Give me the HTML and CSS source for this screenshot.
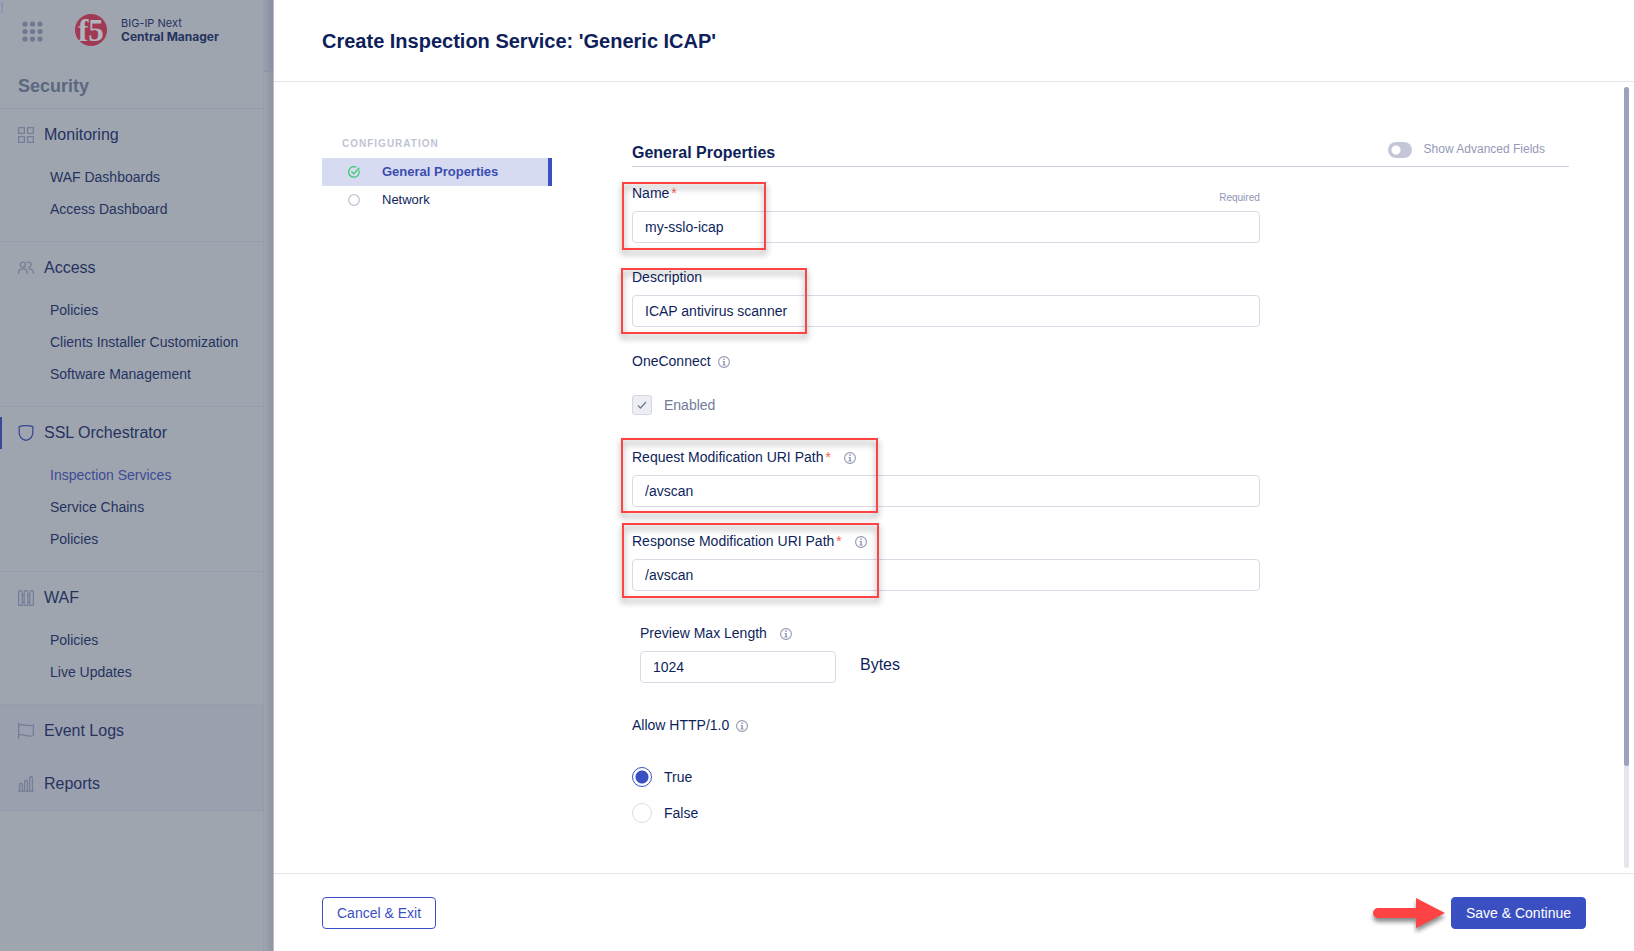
FILE: index.html
```html
<!DOCTYPE html>
<html lang="en">
<head>
<meta charset="utf-8">
<title>Create Inspection Service</title>
<link rel="stylesheet" href="styles.css">
</head>
<body>
<svg class="defs" aria-hidden="true">
  <symbol id="info" viewBox="0 0 12 12"><circle cx="6" cy="6" r="5.4" fill="none" stroke="currentColor" stroke-width="1.1"/><path d="M5.3 2.6h1.5v1.4H5.3zM4.6 5h2.2v3.4h.9v1H4.4v-1h.9V6h-.7z" fill="currentColor"/></symbol>
</svg>
<div class="app">
  <aside class="sidebar">
    <header class="brand">
      <button class="launcher" type="button" aria-label="Applications">
        <svg viewBox="0 0 21 21" width="21" height="21" fill="currentColor"><circle cx="3" cy="3" r="2.6"/><circle cx="10.500" cy="3" r="2.6"/><circle cx="18" cy="3" r="2.6"/><circle cx="3" cy="10.500" r="2.6"/><circle cx="10.500" cy="10.500" r="2.6"/><circle cx="18" cy="10.500" r="2.6"/><circle cx="3" cy="18" r="2.6"/><circle cx="10.500" cy="18" r="2.6"/><circle cx="18" cy="18" r="2.6"/></svg>
      </button>
      <svg class="logo" viewBox="0 0 32 32" width="32" height="32"><circle cx="16" cy="16" r="16" fill="#a03a54"/><text x="3" y="27" class="logo-text">f5</text></svg>
      <div class="product"><span>BIG-IP Next</span><strong>Central Manager</strong></div>
    </header>
    <h2 class="area">Security</h2>
    <nav>
      <section class="group">
        <h3><svg viewBox="0 0 16 16" width="16" height="16"><path d="M.6.6h5.800v5.800h-5.800zM9.600.6h5.800v5.800h-5.800zM.6 9.600h5.800v5.800h-5.800zM9.600 9.600h5.800v5.800h-5.800z"/></svg>Monitoring</h3>
        <a href="#">WAF Dashboards</a><a href="#">Access Dashboard</a>
      </section>
      <section class="group">
        <h3><svg viewBox="0 0 16 16" width="16" height="16"><circle cx="4.800" cy="4.800" r="2.600"/><path d="M.6 14V12.500C.6 10 2.500 8.800 4.800 8.800S9 10 9 12.500V14M8.800 2.800A2.600 2.600 0 1 1 9.800 7.200M10.500 8.900C13.500 8.600 15.400 10 15.400 12.500V14"/></svg>Access</h3>
        <a href="#">Policies</a><a href="#">Clients Installer Customization</a><a href="#">Software Management</a>
      </section>
      <section class="group current">
        <h3><svg viewBox="0 0 16 16" width="16" height="16"><path d="M1.200 1.600Q8-.4 14.800 1.600V7.500C14.800 12 12 14.500 8 15.500C4 14.500 1.200 12 1.200 7.500Z"/></svg>SSL Orchestrator</h3>
        <a href="#" class="active">Inspection Services</a><a href="#">Service Chains</a><a href="#">Policies</a>
      </section>
      <section class="group">
        <h3><svg viewBox="0 0 16 16" width="16" height="16"><path d="M.6 15.400V3Q.6.6 2.400.6T4.200 3V15.400ZM6.200 15.400V3Q6.200.6 8 .6T9.800 3V15.400ZM11.800 15.400V3Q11.800.6 13.600.6T15.400 3V15.400ZM4.200 5h2M4.200 12h2M9.800 5h2M9.800 12h2"/></svg>WAF</h3>
        <a href="#">Policies</a><a href="#">Live Updates</a>
      </section>
      <section class="group single">
        <h3><svg viewBox="0 0 16 16" width="16" height="16"><path d="M.6 0V16M.6 2.500C3-.5 7 4.500 15.400 2V12.500C9 15 4.500 9.500.6 12.500"/></svg>Event Logs</h3>
      </section>
      <section class="group single">
        <h3><svg viewBox="0 0 16 16" width="16" height="16"><path d="M0 15.200H16M1.600 15V8.500Q1.600 7.500 2.600 7.500H3.400Q4.400 7.500 4.400 8.500V15M6.600 15V5.500Q6.600 4.500 7.600 4.500H8.400Q9.400 4.500 9.400 5.500V15M11.600 15V2Q11.600.6 13 .6T14.400 2V15"/></svg>Reports</h3>
      </section>
    </nav>
  </aside>
  <div class="backdrop"><div class="backdrop-bar"></div></div>
  <main class="panel">
    <header class="panel-head"><h1>Create Inspection Service: 'Generic ICAP'</h1></header>
    <div class="panel-body">
      <nav class="steps">
        <p>CONFIGURATION</p>
        <a href="#" class="step selected"><svg viewBox="0 0 12 12" width="12" height="12"><path d="M11 4.500A5.300 5.300 0 1 1 8.300 1.200M3.400 5.400 5.800 7.800 11.400 1.800"/></svg>General Properties</a>
        <a href="#" class="step"><svg viewBox="0 0 12 12" width="12" height="12"><circle cx="6" cy="6" r="5.300"/></svg>Network</a>
      </nav>
      <form class="form" id="icap">
        <div class="form-head">
          <h2>General Properties</h2>
          <label class="advanced"><input type="checkbox" role="switch"><span>Show Advanced Fields</span></label>
        </div>
        <div class="fields">
          <div class="field">
            <div class="caption"><label for="name">Name<i>*</i></label><small>Required</small></div>
            <input type="text" id="name" value="my-sslo-icap">
            <div class="mark mark-name"></div>
          </div>
          <div class="field">
            <div class="caption"><label for="desc">Description</label></div>
            <input type="text" id="desc" value="ICAP antivirus scanner">
            <div class="mark mark-desc"></div>
          </div>
          <div class="field choice">
            <div class="caption"><span>OneConnect</span><svg class="info"><use href="#info"/></svg></div>
            <label class="option disabled"><span class="tick"><input type="checkbox" checked disabled><svg viewBox="0 0 20 20" width="20" height="20"><path d="M6 10.500 8.500 13 14 7"/></svg></span>Enabled</label>
          </div>
          <div class="field">
            <div class="caption"><label for="req">Request Modification URI Path<i>*</i></label><svg class="info wide"><use href="#info"/></svg></div>
            <input type="text" id="req" value="/avscan">
            <div class="mark mark-req"></div>
          </div>
          <div class="field">
            <div class="caption"><label for="res">Response Modification URI Path<i>*</i></label><svg class="info wide"><use href="#info"/></svg></div>
            <input type="text" id="res" value="/avscan">
            <div class="mark mark-res"></div>
          </div>
          <div class="field preview">
            <div class="caption"><label for="len">Preview Max Length</label><svg class="info wide"><use href="#info"/></svg></div>
            <div class="with-unit"><input type="text" id="len" value="1024"><span>Bytes</span></div>
          </div>
          <div class="field choice" role="radiogroup" aria-labelledby="http">
            <div class="caption"><span id="http">Allow HTTP/1.0</span><svg class="info"><use href="#info"/></svg></div>
            <label class="option first"><input type="radio" name="http" checked>True</label>
            <label class="option"><input type="radio" name="http">False</label>
          </div>
        </div>
      </form>
      <div class="scroll"><div class="thumb"></div></div>
    </div>
    <footer class="panel-foot">
      <button type="button" class="btn">Cancel &amp; Exit</button>
      <div class="save">
        <svg class="arrow" viewBox="0 0 74 32" width="74" height="32"><path d="M6 11H44V1L73 16 44 31V21H6A5 5 0 0 1 6 11Z" fill="#fd4343"/></svg>
        <button type="submit" form="icap" class="btn primary">Save &amp; Continue</button>
      </div>
    </footer>
  </main>
</div>
</body>
</html>
```

FILE: styles.css
```css
* { box-sizing: border-box; }
body { margin: 0; font-family: "Liberation Sans", Arial, sans-serif; font-size: 14px; line-height: 20px; color: #0e1f5b; }
h1, h2, h3, p { margin: 0; }
a { color: inherit; text-decoration: none; }
button, input { font: inherit; color: inherit; margin: 0; }
.defs { display: none; }
.app { display: flex; min-height: 100vh; background: #9ea5af; }

/* Sidebar */
.sidebar { position: relative; flex: 0 0 264px; border-right: 1px solid #979daa; color: #26335f; }
.sidebar::before { content: ""; position: absolute; left: 1px; top: 2px; width: 2px; height: 11px; background: #8c94b8; }
.brand { display: flex; align-items: flex-start; height: 64px; padding: 14px 0 0 22px; }
.launcher { display: block; padding: 0; margin: 7px 32px 0 0; border: 0; background: none; color: #6f7990; line-height: 0; }
.logo { flex: none; margin-right: 14px; overflow: visible; }
.logo-text { fill: #b0b5be; font-family: "Liberation Serif", serif; font-size: 31px; font-weight: 700; }
.product { display: flex; flex-direction: column; padding-top: 2px; font-family: Inter, sans-serif; line-height: 14px; }
.product span { font-size: 11px; }
.product strong { font-size: 12px; font-weight: 700; }
.area { padding: 10px 18px; height: 45px; border-bottom: 1px solid #969daa; font-size: 18px; line-height: 24px; color: #5c6780; }
.group { padding-bottom: 16px; border-bottom: 1px solid #979daa; }
.group h3 { display: flex; align-items: center; gap: 10px; height: 52px; padding-left: 18px; font-size: 16px; font-weight: 400; }
.group h3 svg { fill: none; stroke: #757e96; stroke-width: 1.3; }
.group a { display: block; padding-left: 50px; line-height: 32px; }
.group .active { color: #3d4a96; }
.current h3 { background: linear-gradient(#3b4998, #3b4998) 0 50% / 2px 32px no-repeat; }
.current h3 svg { stroke: #3d4a96; }
.single { padding-bottom: 0; background: #9ba0ae; }
.backdrop { flex: 0 0 10px; background: linear-gradient(90deg, #9ea5af, #8e95a3); border-right: 1px solid #b9bec7; }
.backdrop-bar { height: 72px; border-bottom: 1px solid #8c93a3; background: linear-gradient(90deg, #999fad, #888fa0); }

/* Panel */
.panel { flex: 1; min-width: 0; display: flex; flex-direction: column; background: #fff; }
.panel-head { height: 82px; padding: 26px 48px; border-bottom: 1px solid #e5e6ee; }
.panel-head h1 { font-size: 20px; line-height: 30px; }
.panel-body { flex: 1; display: flex; padding-left: 48px; }
.steps { flex: 0 0 230px; padding-top: 52px; font-size: 13px; }
.steps p { padding: 0 0 4px 20px; font-size: 10px; font-weight: 700; letter-spacing: 1px; color: #c0c4d5; }
.step { display: flex; align-items: center; gap: 22px; height: 28px; padding-left: 26px; }
.step svg { fill: none; stroke: #c0c4d5; stroke-width: 1.3; }
.selected { font-weight: 700; color: #3a4db0; background: #d7dbf1; border-right: 4px solid #3a50c2; }
.selected svg { stroke: #3ecb75; }

/* Form */
.form { flex: 1; margin: 50px 55px 50px 80px; }
.form-head { display: flex; justify-content: space-between; height: 35px; border-bottom: 1px solid #cbd0e3; }
.form-head h2 { padding-top: 11px; font-size: 16px; line-height: 20px; }
.advanced { display: flex; align-items: center; gap: 12px; height: 34px; padding: 2px 24px 0 0; font-size: 12px; color: #9399b7; }
.advanced span { padding-bottom: 3px; }
.advanced input { appearance: none; width: 24px; height: 16px; border-radius: 8px; background: radial-gradient(circle at 8px 8px, #fff 4px, #c4c7d7 5px); }
.fields { width: 67%; padding-top: 16px; display: flex; flex-direction: column; gap: 24px; }
.field { position: relative; }
.caption { display: flex; align-items: center; height: 20px; margin-bottom: 8px; }
.caption i { margin-left: 2px; font-style: normal; color: #fd5c4c; }
.caption small { margin: 10px 0 0 auto; font-size: 10px; color: #8e95b3; }
.info { width: 12px; height: 12px; margin: 2px 0 0 7px; color: #9298b2; }
.info.wide { margin-left: 13px; }
input[type=text] { display: block; width: 100%; height: 32px; padding: 0 12px; border: 1px solid #d8dae5; border-radius: 4px; background: #fff; }
.option { display: flex; align-items: center; gap: 12px; height: 20px; margin-top: 16px; }
.option input { flex: none; }
.disabled { margin: 24px 0 8px; color: #737b9a; }
.tick { display: grid; }
.tick > * { grid-area: 1 / 1; }
.tick input { appearance: none; width: 20px; height: 20px; border: 1px solid #d5d7e2; border-radius: 3px; background: #edeef3; }
.tick svg { position: relative; fill: none; stroke: #747c9c; stroke-width: 1.4; }
.option.first { margin-top: 32px; }
.option input[type=radio] { appearance: none; width: 20px; height: 20px; border: 1px solid #dcdee8; border-radius: 50%; background: #fff; }
.option input[type=radio]:checked { border-color: #3a50c2; background: radial-gradient(circle, #3a50c2 6px, #fff 7px); }
.preview { margin: 8px 0 8px 8px; }
.with-unit { display: flex; gap: 24px; font-size: 16px; }
.with-unit span { padding-top: 4px; }
.with-unit input { width: 196px; font-size: 14px; }

/* Callouts */
.mark { position: absolute; border: 2px solid #fd4343; filter: drop-shadow(0 4px 3px rgba(0, 0, 0, 0.45)); pointer-events: none; }
.mark-name { left: -10px; top: -1px; bottom: -7px; width: 144px; }
.mark-desc { left: -11px; top: 1px; bottom: -7px; width: 186px; }
.mark-req { left: -11px; top: -9px; bottom: -6px; width: 257px; }
.mark-res { left: -10px; top: -8px; bottom: -7px; width: 257px; }

.scroll { flex: 0 0 5px; margin: 5px 5px 5px 0; border-radius: 3px; background: #e5e6ee; }
.thumb { height: 87%; border-radius: 3px; background: #9ba2bd; }

/* Footer */
.panel-foot { display: flex; justify-content: space-between; align-items: center; height: 78px; padding: 0 48px; border-top: 1px solid #e5e6ee; }
.btn { height: 32px; padding: 0 14px; border: 1px solid #3a50c2; border-radius: 4px; background: #fff; color: #3a50c2; }
.primary { background: #3a50c2; color: #fff; }
.save { position: relative; }
.arrow { position: absolute; right: 140px; top: 0; filter: drop-shadow(0 4px 2px rgba(0, 0, 0, 0.45)); overflow: visible; }
```
